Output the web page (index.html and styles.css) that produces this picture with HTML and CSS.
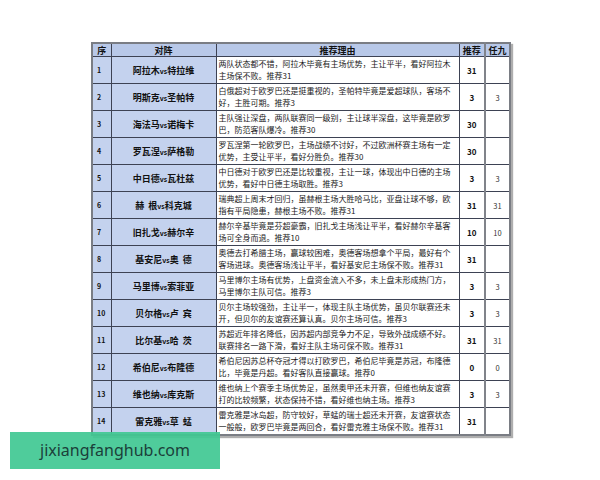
FILE: index.html
```html
<!DOCTYPE html>
<html lang="zh">
<head>
<meta charset="utf-8">
<link rel="stylesheet" href="styles.css">
</head>
<body>
<div class="page">
  <table class="picks">
    <colgroup>
      <col class="c-no"><col class="c-match"><col class="c-reason"><col class="c-rec"><col class="c-r9">
    </colgroup>
    <thead>
      <tr><th>序</th><th>对阵</th><th>推荐理由</th><th class="rec">推荐</th><th>任九</th></tr>
    </thead>
    <tbody>
      <tr><td class="no">1</td><td class="match">阿拉木<span class="vs">vs</span>特拉维</td><td class="reason">两队状态都不错，阿拉木毕竟有主场优势，主让平半，看好阿拉木主场保不败。推荐31</td><td class="rec">31</td><td class="r9"></td></tr>
      <tr><td class="no">2</td><td class="match">明斯克<span class="vs">vs</span>圣帕特</td><td class="reason">白俄超对于欧罗巴还是挺重视的，圣帕特毕竟是爱超球队，客场不好，主胜可期。推荐3</td><td class="rec">3</td><td class="r9">3</td></tr>
      <tr><td class="no">3</td><td class="match">海法马<span class="vs">vs</span>诺梅卡</td><td class="reason">主队强让深盘，两队联赛同一级别，主让球半深盘，这毕竟是欧罗巴，防范客队爆冷。推荐30</td><td class="rec">30</td><td class="r9"></td></tr>
      <tr><td class="no">4</td><td class="match">罗瓦涅<span class="vs">vs</span>萨格勒</td><td class="reason">罗瓦涅第一轮欧罗巴，主场战绩不讨好，不过欧洲杯赛主场有一定优势，主受让平半，看好分胜负。推荐30</td><td class="rec">30</td><td class="r9"></td></tr>
      <tr><td class="no">5</td><td class="match">中日德<span class="vs">vs</span>瓦杜兹</td><td class="reason">中日德对于欧罗巴还是比较重视，主让一球，体现出中日德的主场优势，看好中日德主场取胜。推荐3</td><td class="rec">3</td><td class="r9">3</td></tr>
      <tr><td class="no">6</td><td class="match">赫&nbsp;&nbsp;根<span class="vs">vs</span>科克城</td><td class="reason">瑞典超上周末才回归，虽赫根主场大胜哈马比，亚盘让球不够，欧指有平局隐患，赫根主场不败。推荐31</td><td class="rec">31</td><td class="r9">31</td></tr>
      <tr><td class="no">7</td><td class="match">旧扎戈<span class="vs">vs</span>赫尔辛</td><td class="reason">赫尔辛基毕竟是芬超豪霸，旧扎戈主场浅让平半，看好赫尔辛基客场可全身而退。推荐10</td><td class="rec">10</td><td class="r9">10</td></tr>
      <tr><td class="no">8</td><td class="match">基安尼<span class="vs">vs</span>奥&nbsp;&nbsp;德</td><td class="reason">奥德去打希腊主场，赢球较困难，奥德客场想拿个平局，最好有个客场进球。奥德客场浅让平半，看好基安尼主场保不败。推荐31</td><td class="rec">31</td><td class="r9"></td></tr>
      <tr><td class="no">9</td><td class="match">马里博<span class="vs">vs</span>索菲亚</td><td class="reason">马里博尔主场有优势，上盘资金流入不多，未上盘未形成热门方，马里博尔主队可信。推荐3</td><td class="rec">3</td><td class="r9">3</td></tr>
      <tr><td class="no">10</td><td class="match">贝尔格<span class="vs">vs</span>卢&nbsp;&nbsp;宾</td><td class="reason">贝尔主场较强劲，主让半一，体现主队主场优势，虽贝尔联赛还未开，但贝尔的友谊赛还算认真。贝尔主场可信。推荐3</td><td class="rec">3</td><td class="r9">3</td></tr>
      <tr><td class="no">11</td><td class="match">比尔基<span class="vs">vs</span>哈&nbsp;&nbsp;茨</td><td class="reason">苏超近年排名降低，因苏超内部竞争力不足，导致外战成绩不好。联赛排名一路下滑，看好主队主场可保不败。推荐31</td><td class="rec">31</td><td class="r9">31</td></tr>
      <tr><td class="no">12</td><td class="match">希伯尼<span class="vs">vs</span>布隆德</td><td class="reason">希伯尼因苏总杯夺冠才得以打欧罗巴，希伯尼毕竟是苏冠，布隆德比，毕竟是丹超。看好客队直接赢球。推荐0</td><td class="rec">0</td><td class="r9">0</td></tr>
      <tr><td class="no">13</td><td class="match">维也纳<span class="vs">vs</span>库克斯</td><td class="reason">维也纳上个赛季主场优势足，虽然奥甲还未开赛，但维也纳友谊赛打的比较频繁，状态保持不错，看好维也纳主场。推荐3</td><td class="rec">3</td><td class="r9">3</td></tr>
      <tr><td class="no">14</td><td class="match">雷克雅<span class="vs">vs</span>草&nbsp;&nbsp;蜢</td><td class="reason">雷克雅是冰岛超，防守较好，草蜢的瑞士超还未开赛，友谊赛状态一般般，欧罗巴毕竟是两回合，看好雷克雅主场保不败。推荐31</td><td class="rec">31</td><td class="r9"></td></tr>
    </tbody>
  </table>
  <div class="watermark">jixiangfanghub.com</div>
</div>
</body>
</html>
```

FILE: styles.css
```css
html, body {
  margin: 0;
  padding: 0;
  background: #ffffff;
}
.page {
  position: relative;
  width: 600px;
  height: 480px;
  padding: 42px 0 0 91px;
  box-sizing: border-box;
  font-family: "Noto Sans CJK SC", "Noto Sans", sans-serif;
}
.picks {
  border-collapse: collapse;
  table-layout: fixed;
  width: 418px;
  border: 2px solid #7a7d84;
  box-shadow: 2px 2px 1px rgba(120, 120, 120, 0.6);
  color: #111;
}
.c-no { width: 19px; }
.c-match { width: 105px; }
.c-reason { width: 243px; }
.c-rec { width: 26px; }
.c-r9 { width: 25px; }
.picks th, .picks td {
  border: 1px solid #3d4253;
  padding: 0;
  text-align: center;
  vertical-align: middle;
}
.picks th {
  height: 12px;
  background: #b8c8e8;
  font-size: 9px;
  line-height: 11px;
  font-weight: bold;
}
.picks td {
  height: 26px;
  background: #ffffff;
}
.picks td.no {
  background: #c4d2ee;
  font-size: 7px;
  font-weight: bold;
  text-align: left;
  padding-left: 4px;
}
.picks td.match {
  background: #c4d2ee;
  font-size: 9px;
  font-weight: bold;
  white-space: nowrap;
}
.vs {
  font-size: 7px;
}
.picks td.reason {
  text-align: left;
  font-size: 8px;
  line-height: 12px;
  padding: 0 2px 0 2px;
  color: #1a1a1a;
}
.picks td.rec {
  font-size: 8px;
  font-weight: bold;
  border-right: 2px solid #80838a;
}
.picks th.rec {
  border-right: 2px solid #80838a;
}
.picks td.r9 {
  font-size: 7.5px;
  color: #333;
}
.watermark {
  position: absolute;
  left: 10px;
  top: 432px;
  width: 210px;
  height: 37px;
  background: rgba(64, 200, 146, 0.92);
  color: #1b3f3a;
  font-family: "Noto Sans", "Open Sans", sans-serif;
  font-size: 16px;
  line-height: 37px;
  text-align: center;
}
```
